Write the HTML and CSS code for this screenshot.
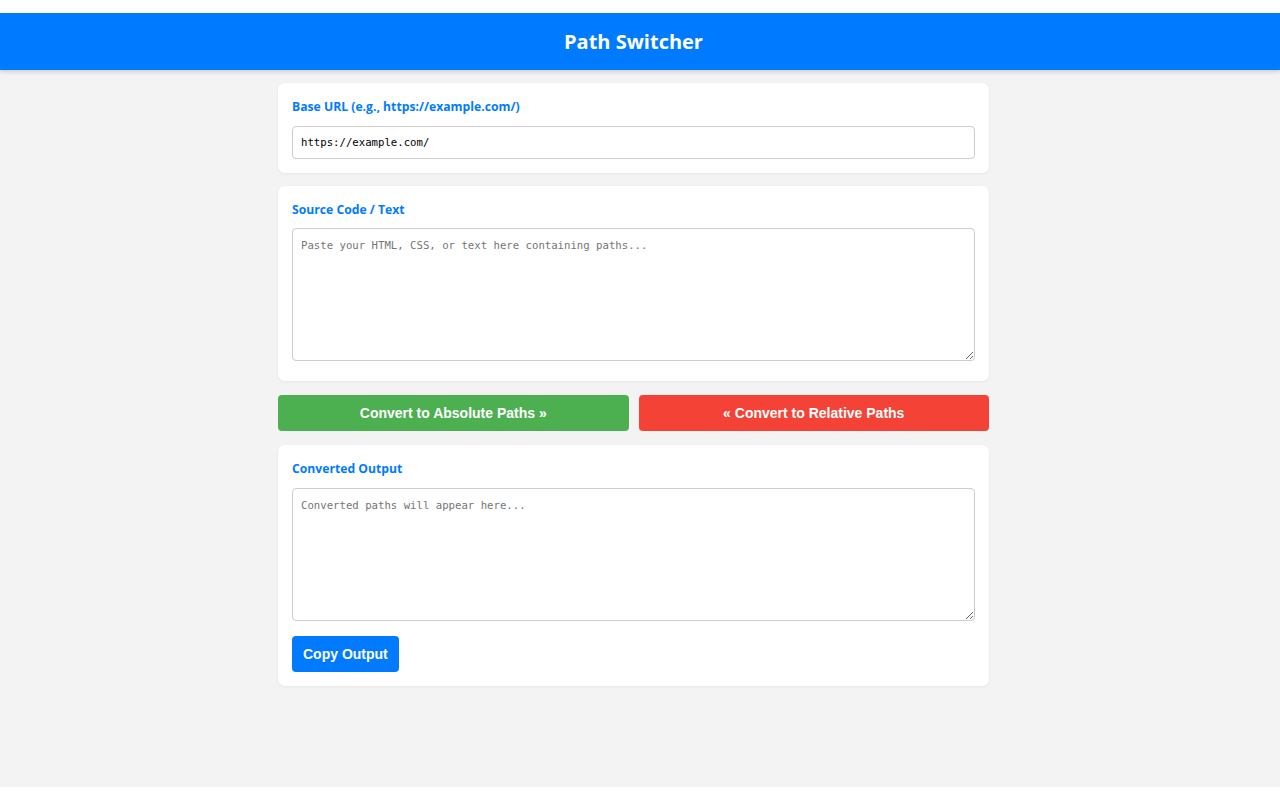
FILE: index.html
```html
<!DOCTYPE html>
<html>
  <head>
    <meta charset="utf-8">
    <title>Path Switcher</title>
    <link rel="stylesheet" href="styles.css">
  </head>
  <body>
    <header class="topbar">
      <h1>Path Switcher</h1>
    </header>

    <main class="page">
      <section class="card">
        <label class="field-label" for="base-url">Base URL (e.g., https://example.com/)</label>
        <input class="mono-input" id="base-url" type="text" value="https://example.com/">
      </section>

      <section class="card">
        <label class="field-label" for="source">Source Code / Text</label>
        <textarea class="mono-area" id="source" placeholder="Paste your HTML, CSS, or text here containing paths..."></textarea>
      </section>

      <div class="actions">
        <button class="btn btn-green" type="button">Convert to Absolute Paths &raquo;</button>
        <button class="btn btn-red" type="button">&laquo; Convert to Relative Paths</button>
      </div>

      <section class="card card-output">
        <label class="field-label" for="output">Converted Output</label>
        <textarea class="mono-area" id="output" placeholder="Converted paths will appear here..." readonly></textarea>
        <button class="btn btn-blue" type="button">Copy Output</button>
      </section>
    </main>
  </body>
</html>
```

FILE: styles.css
```css
html {background:#fff;}
body {margin:13px 0; min-height:calc(100vh - 26px); background:#f3f3f3; font-family:"Segoe UI", "Open Sans", "Noto Sans", sans-serif; box-sizing:border-box;}

.topbar {background:#007bff; height:57px; display:flex; align-items:center; justify-content:center; padding-right:13px; box-shadow:0 2px 4px rgba(0,0,0,0.15);}
.topbar h1 {margin:0; color:#fff; font-size:20px; font-weight:700;}

.page {width:711px; margin:0 auto; padding:13px 13px 0 0; display:flex; flex-direction:column; gap:13px;}

.card {background:#fff; border-radius:7px; padding:14px; box-shadow:0 1px 3px rgba(0,0,0,0.06); display:flex; flex-direction:column; align-items:flex-start;}

.field-label {color:#007bff; font-size:12.2px; font-weight:700; line-height:20px; margin-bottom:9px;}

.mono-input, .mono-area {width:100%; box-sizing:border-box; border:1px solid #ccc; border-radius:4px; padding:8px; font-family:"DejaVu Sans Mono", "Liberation Mono", monospace; font-size:10.67px; color:#000; background:#fff;}
.mono-input {height:33px;}
.mono-area {height:133px; padding-top:10px; resize:vertical; margin-top:-1px; margin-bottom:6px;}
.card-output .mono-area {margin-top:0;}
.mono-area::placeholder, .mono-input::placeholder {color:#757575;}

.actions {display:flex; gap:10px; margin:1px 0 1px;}
.btn {height:36px; border:0; border-radius:4px; color:#fff; font-family:"Liberation Sans", Arial, sans-serif; font-size:14px; font-weight:700; cursor:pointer;}
.actions .btn {flex:1;}
.btn-green {background:#4caf50;}
.btn-red {background:#f44336;}
.btn-blue {background:#007bff; padding:0 11px; margin-top:9px;}
```
